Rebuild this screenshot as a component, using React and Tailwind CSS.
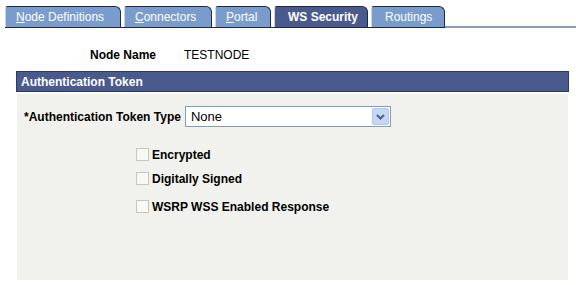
const TABS = [
  { label: 'Node Definitions', key: 'N', rest: 'ode Definitions', w: 116 },
  { label: 'Connectors', key: 'C', rest: 'onnectors', w: 88 },
  { label: 'Portal', key: 'P', rest: 'ortal', w: 56 },
  { label: 'WS Security', active: true, w: 94 },
  { label: 'Routings', w: 74 },
]

const CHECKS = [
  { label: 'Encrypted', mt: 'mt-[21px]' },
  { label: 'Digitally Signed', mt: 'mt-[11px]' },
  { label: 'WSRP WSS Enabled Response', mt: 'mt-[15px]' },
]

function Tab({ tab }) {
  return (
    <div
      className={`h-[21px] flex items-center pl-[10px] rounded-tr-[6px] rounded-tl-[3px] border-t border-r border-[#1c2a44] border-l border-l-[#c8d6ea] text-[12px] ${
        tab.active ? 'bg-[#4a5a8c] font-bold text-white' : 'bg-[#7a9ccc] text-white'
      }`}
      style={{ width: tab.w }}
    >
      {tab.key ? (
        <span>
          <span className="underline">{tab.key}</span>
          {tab.rest}
        </span>
      ) : (
        <span className="pl-[3px]">{tab.label}</span>
      )}
    </div>
  )
}

export default function App() {
  return (
    <div className="w-[576px] h-[285px] bg-white overflow-hidden leading-[14px]" style={{ fontFamily: "'Liberation Sans', Arial, sans-serif" }}>
      {/* Tabs */}
      <div className="flex items-end pt-[6px] pl-[5px]">
        <div className="flex items-end gap-[3px] border-b border-[#1c2a44]">
          {TABS.map(t => <Tab key={t.label} tab={t} />)}
        </div>
        <div className="flex-1 h-[2px] bg-[#8a9db4]" />
      </div>

      {/* Node name */}
      <div className="flex items-center mt-[20px] text-[12px] text-black">
        <span className="w-[156px] text-right font-bold">Node Name</span>
        <span className="ml-[28px]">TESTNODE</span>
      </div>

      {/* Section */}
      <div className="ml-[16px] mr-[7px] mt-[9px]">
        <div className="h-[21px] flex items-center pl-[4px] bg-[#4a5a8c] border border-[#2e3a66] text-white font-bold text-[12px]">
          Authentication Token
        </div>
        <div className="mt-[2px] mx-[1px] h-[186px] bg-[#f1f2ed] flex flex-col">
          <div className="flex items-center mt-[12px] pl-[7px] text-[12px]">
            <span className="font-bold">*Authentication Token Type</span>
            <div className="ml-[4px] w-[206px] h-[21px] border border-[#7f9db9] bg-white flex items-center justify-between pl-[5px] pr-[1px] text-[13px]">
              <span>None</span>
              <div className="w-[17px] h-[17px] rounded-[2px] bg-[#c6d6f7] border border-[#b5c7ea] flex items-center justify-center">
                <svg width="9" height="6" viewBox="0 0 9 6">
                  <path d="M1 1 L4.5 4.5 L8 1" fill="none" stroke="#4d6185" strokeWidth="2" />
                </svg>
              </div>
            </div>
          </div>
          {CHECKS.map(c => (
            <div key={c.label} className={`flex items-center h-[13px] pl-[119px] ${c.mt}`}>
              <div className="w-[13px] h-[13px] border border-[#c9c7ba] bg-[#f8f8f4]" />
              <span className="ml-[3px] text-[12px] font-bold text-black">{c.label}</span>
            </div>
          ))}
        </div>
      </div>
    </div>
  )
}
